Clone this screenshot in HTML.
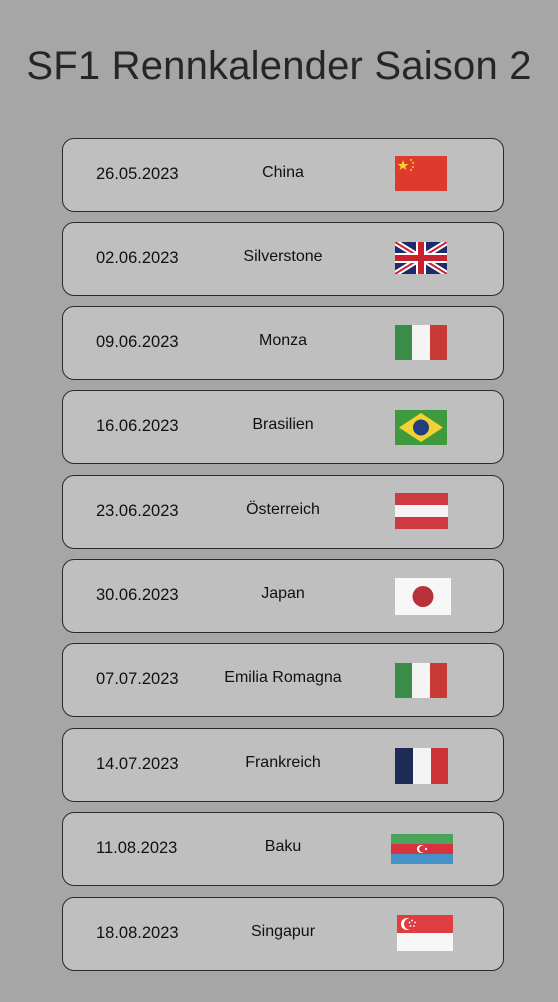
<!DOCTYPE html>
<html><head><meta charset="utf-8"><style>
body{margin:0;width:558px;height:1002px;background:#a6a6a6;font-family:"Liberation Sans",sans-serif;position:relative;overflow:hidden}
h1{position:absolute;top:44px;left:0;width:558px;text-align:center;margin:0;font-weight:normal;font-size:40px;color:#262626;letter-spacing:0.2px}
.r{position:absolute;left:62px;width:440px;height:72px;border:1.6px solid #2a2a2a;border-radius:12px;background:#bfbfbf}
.d{position:absolute;left:33px;top:26px;font-size:16.5px;color:#111}
.n{position:absolute;left:140px;width:160px;text-align:center;top:25px;font-size:16px;color:#111}
svg{position:absolute}
</style></head><body>
<h1>SF1 Rennkalender Saison 2</h1>

<div class="r" style="top:138px"><span class="d">26.05.2023</span><span class="n">China</span>
<svg style="left:332px;top:17px" width="52" height="35"><rect width="52" height="35" fill="#de3a2e"/><polygon points="8,4 9.5,8 13.5,8 10.3,10.5 11.5,14 8,11.8 4.5,14 5.7,10.5 2.5,8 6.5,8" fill="#f5d22b"/><circle cx="16" cy="4" r="1" fill="#f5d22b"/><circle cx="18" cy="7" r="1" fill="#f5d22b"/><circle cx="18" cy="11" r="1" fill="#f5d22b"/><circle cx="16" cy="14" r="1" fill="#f5d22b"/></svg></div>

<div class="r" style="top:222px"><span class="d">02.06.2023</span><span class="n">Silverstone</span>
<svg style="left:332px;top:19px" width="52" height="32"><rect width="52" height="32" fill="#1f2a6b"/><path d="M0,0L52,32M52,0L0,32" stroke="#fff" stroke-width="6"/><path d="M0,0L52,32M52,0L0,32" stroke="#c8202f" stroke-width="2"/><path d="M26,0V32M0,16H52" stroke="#fff" stroke-width="10"/><path d="M26,0V32M0,16H52" stroke="#c8202f" stroke-width="6"/></svg></div>

<div class="r" style="top:306px"><span class="d">09.06.2023</span><span class="n">Monza</span>
<svg style="left:332px;top:18px" width="52" height="35"><rect width="18" height="35" fill="#3a8c47"/><rect x="17" width="18" height="35" fill="#f4f4f4"/><rect x="35" width="17" height="35" fill="#c93a37"/></svg></div>

<div class="r" style="top:390px"><span class="d">16.06.2023</span><span class="n">Brasilien</span>
<svg style="left:332px;top:19px" width="52" height="35"><rect width="52" height="35" fill="#3f9a3d"/><polygon points="26,3 48,17.5 26,32 4,17.5" fill="#f2d230"/><circle cx="26" cy="17.5" r="8" fill="#223d80"/></svg></div>

<div class="r" style="top:475px"><span class="d">23.06.2023</span><span class="n">Österreich</span>
<svg style="left:332px;top:17px" width="53" height="36"><rect width="53" height="36" fill="#cf3a40"/><rect y="12" width="53" height="12" fill="#f4f4f4"/></svg></div>

<div class="r" style="top:559px"><span class="d">30.06.2023</span><span class="n">Japan</span>
<svg style="left:332px;top:18px" width="56" height="37"><rect width="56" height="37" fill="#f7f7f7"/><circle cx="28" cy="18.5" r="10.5" fill="#b8323a"/></svg></div>

<div class="r" style="top:643px"><span class="d">07.07.2023</span><span class="n">Emilia Romagna</span>
<svg style="left:332px;top:19px" width="52" height="35"><rect width="18" height="35" fill="#3a8c47"/><rect x="17" width="18" height="35" fill="#f4f4f4"/><rect x="35" width="17" height="35" fill="#c93a37"/></svg></div>

<div class="r" style="top:728px"><span class="d">14.07.2023</span><span class="n">Frankreich</span>
<svg style="left:332px;top:19px" width="53" height="36"><rect width="18" height="36" fill="#1e2b57"/><rect x="18" width="18" height="36" fill="#f4f4f4"/><rect x="36" width="17" height="36" fill="#cc3436"/></svg></div>

<div class="r" style="top:812px"><span class="d">11.08.2023</span><span class="n">Baku</span>
<svg style="left:328px;top:21px" width="62" height="30"><rect width="62" height="10" fill="#4aa55a"/><rect y="10" width="62" height="10" fill="#d8313f"/><rect y="20" width="62" height="10" fill="#4393c7"/><circle cx="30" cy="15" r="4" fill="#fff"/><circle cx="31.3" cy="15" r="3.2" fill="#d8313f"/><circle cx="35" cy="15" r="1.2" fill="#fff"/></svg></div>

<div class="r" style="top:897px"><span class="d">18.08.2023</span><span class="n">Singapur</span>
<svg style="left:334px;top:17px" width="56" height="36"><rect width="56" height="18" fill="#df3d42"/><rect y="18" width="56" height="18" fill="#f7f7f7"/><circle cx="10" cy="9" r="6" fill="#fff"/><circle cx="12.5" cy="9" r="5.5" fill="#df3d42"/><g fill="#fff"><circle cx="15" cy="5.5" r="0.9"/><circle cx="18" cy="7.5" r="0.9"/><circle cx="17" cy="11" r="0.9"/><circle cx="13.5" cy="11" r="0.9"/><circle cx="12.5" cy="7.5" r="0.9"/></g></svg></div>
</body></html>
